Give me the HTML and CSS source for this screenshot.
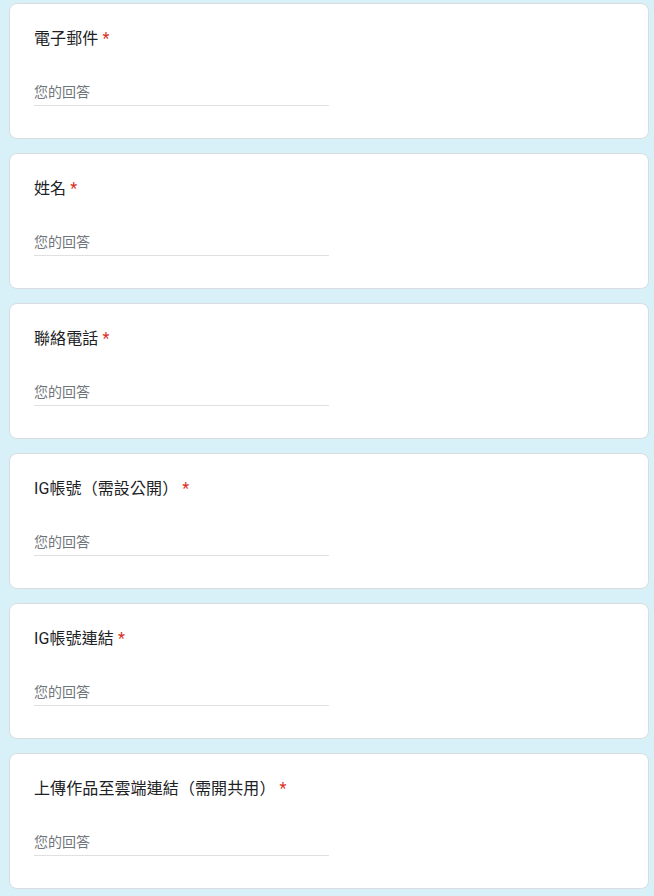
FILE: index.html
```html
<!DOCTYPE html>
<html lang="zh-Hant">
<head>
    <meta charset="UTF-8">
    <meta name="viewport" content="width=device-width, initial-scale=1.0">
    <title>表單</title>
    <link rel="stylesheet" href="styles.css">
</head>
<body>
    <div class="form">
        <div class="question">
            <div class="title">電子郵件 <span class="required">*</span></div>
            <div class="answer">您的回答</div>
        </div>
        <div class="question">
            <div class="title">姓名 <span class="required">*</span></div>
            <div class="answer">您的回答</div>
        </div>
        <div class="question">
            <div class="title">聯絡電話 <span class="required">*</span></div>
            <div class="answer">您的回答</div>
        </div>
        <div class="question">
            <div class="title">IG帳號（需設公開） <span class="required">*</span></div>
            <div class="answer">您的回答</div>
        </div>
        <div class="question">
            <div class="title">IG帳號連結 <span class="required">*</span></div>
            <div class="answer">您的回答</div>
        </div>
        <div class="question">
            <div class="title">上傳作品至雲端連結（需開共用） <span class="required">*</span></div>
            <div class="answer">您的回答</div>
        </div>
    </div>
</body>
</html>
```

FILE: styles.css
```css
body {
    margin: 0;
    background-color: #d8f1f8;
    font-family: Roboto, "Noto Sans CJK TC", sans-serif;
}
.form {
    display: flex;
    flex-direction: column;
    gap: 14px;
    width: 640px;
    margin: 3px 0 0 9px;
}
.question {
    background-color: #fff;
    border: 1px solid #dadce0;
    border-radius: 8px;
    padding: 23px 24px 32px;
}
.title {
    font-size: 16px;
    line-height: 24px;
    color: #202124;
    letter-spacing: 0.1px;
}
.required {
    color: #d93025;
}
.answer {
    width: 50%;
    margin-top: 29px;
    padding-bottom: 1px;
    border-bottom: 1px solid #e0e0e0;
    font-size: 14px;
    line-height: 24px;
    color: #70757a;
}
```
